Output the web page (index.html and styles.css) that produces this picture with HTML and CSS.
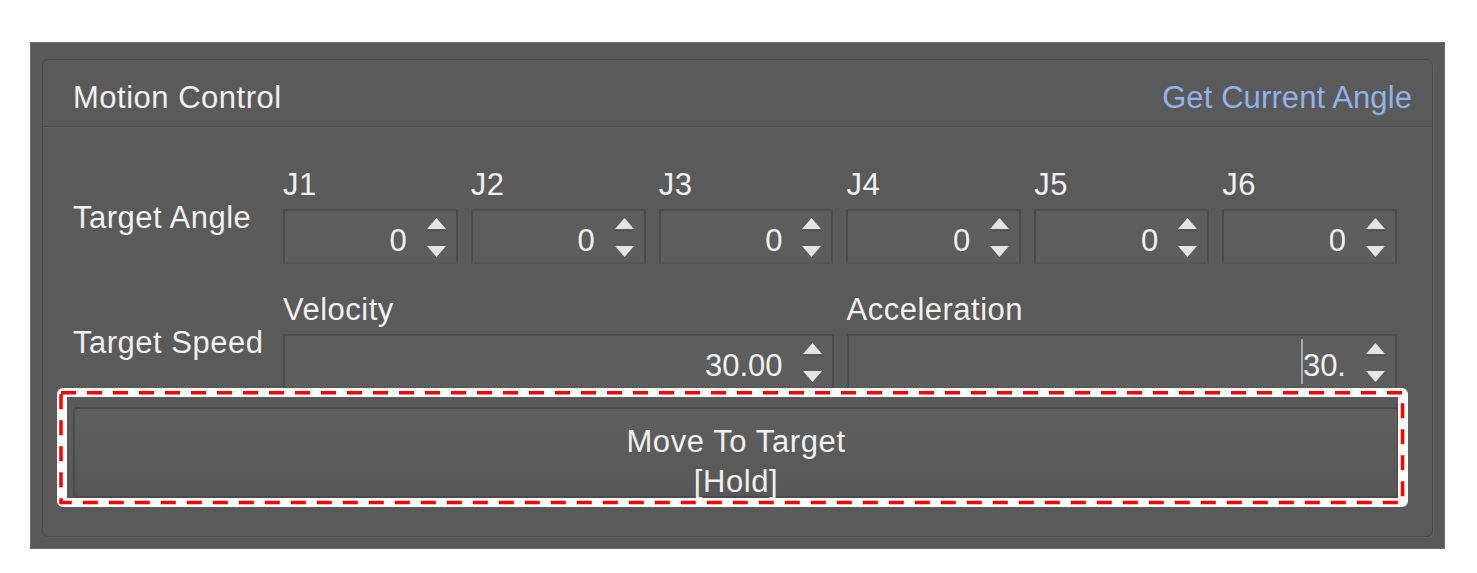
FILE: index.html
```html
<!DOCTYPE html>
<html lang="en">
<head>
  <meta charset="UTF-8">
  <meta name="viewport" content="width=device-width, initial-scale=1.0">
  <title>Motion Control</title>
  <link rel="stylesheet" href="styles.css">
</head>
<body>
  <div class="panel">
    <div class="group">
      <div class="group-head">
        <span class="title">Motion Control</span>
        <a class="link" href="#">Get Current Angle</a>
      </div>

      <div class="group-body">
        <div class="row">
          <div class="row-label">Target Angle</div>
          <div class="fields six">
            <div class="field">
              <div class="field-label">J1</div>
              <div class="spin"><span class="val">0</span><svg class="arrows" width="19" height="40" viewBox="0 0 19 40"><polygon points="9.5,0 19,11 0,11" fill="#e4e4e4"/><rect x="0" y="12" width="19" height="1" fill="#505050"/><polygon points="0,28 19,28 9.5,39" fill="#e4e4e4"/></svg></div>
            </div>
            <div class="field">
              <div class="field-label">J2</div>
              <div class="spin"><span class="val">0</span><svg class="arrows" width="19" height="40" viewBox="0 0 19 40"><polygon points="9.5,0 19,11 0,11" fill="#e4e4e4"/><rect x="0" y="12" width="19" height="1" fill="#505050"/><polygon points="0,28 19,28 9.5,39" fill="#e4e4e4"/></svg></div>
            </div>
            <div class="field">
              <div class="field-label">J3</div>
              <div class="spin"><span class="val">0</span><svg class="arrows" width="19" height="40" viewBox="0 0 19 40"><polygon points="9.5,0 19,11 0,11" fill="#e4e4e4"/><rect x="0" y="12" width="19" height="1" fill="#505050"/><polygon points="0,28 19,28 9.5,39" fill="#e4e4e4"/></svg></div>
            </div>
            <div class="field">
              <div class="field-label">J4</div>
              <div class="spin"><span class="val">0</span><svg class="arrows" width="19" height="40" viewBox="0 0 19 40"><polygon points="9.5,0 19,11 0,11" fill="#e4e4e4"/><rect x="0" y="12" width="19" height="1" fill="#505050"/><polygon points="0,28 19,28 9.5,39" fill="#e4e4e4"/></svg></div>
            </div>
            <div class="field">
              <div class="field-label">J5</div>
              <div class="spin"><span class="val">0</span><svg class="arrows" width="19" height="40" viewBox="0 0 19 40"><polygon points="9.5,0 19,11 0,11" fill="#e4e4e4"/><rect x="0" y="12" width="19" height="1" fill="#505050"/><polygon points="0,28 19,28 9.5,39" fill="#e4e4e4"/></svg></div>
            </div>
            <div class="field">
              <div class="field-label">J6</div>
              <div class="spin"><span class="val">0</span><svg class="arrows" width="19" height="40" viewBox="0 0 19 40"><polygon points="9.5,0 19,11 0,11" fill="#e4e4e4"/><rect x="0" y="12" width="19" height="1" fill="#505050"/><polygon points="0,28 19,28 9.5,39" fill="#e4e4e4"/></svg></div>
            </div>
          </div>
        </div>

        <div class="row row-speed">
          <div class="row-label">Target Speed</div>
          <div class="fields two">
            <div class="field">
              <div class="field-label">Velocity</div>
              <div class="spin"><span class="val">30.00</span><svg class="arrows" width="19" height="40" viewBox="0 0 19 40"><polygon points="9.5,0 19,11 0,11" fill="#e4e4e4"/><rect x="0" y="12" width="19" height="1" fill="#505050"/><polygon points="0,28 19,28 9.5,39" fill="#e4e4e4"/></svg></div>
            </div>
            <div class="field">
              <div class="field-label">Acceleration</div>
              <div class="spin"><span class="val caret">30.</span><svg class="arrows" width="19" height="40" viewBox="0 0 19 40"><polygon points="9.5,0 19,11 0,11" fill="#e4e4e4"/><rect x="0" y="12" width="19" height="1" fill="#505050"/><polygon points="0,28 19,28 9.5,39" fill="#e4e4e4"/></svg></div>
            </div>
          </div>
        </div>

        <button class="move-btn">Move To Target<br>[Hold]</button>
      </div>
    </div>

    <!-- highlight around the hold button -->
    <svg class="mark" width="1351" height="120" viewBox="0 0 1351 120">
      <path fill="#fff" fill-rule="evenodd" d="M6 0 H1345 A6 6 0 0 1 1351 6 V113 A6 6 0 0 1 1345 119 H6 A6 6 0 0 1 0 113 V6 A6 6 0 0 1 6 0 Z M10 9 V110 H1341 V9 Z"/>
      <rect x="4" y="4.7" width="1341.5" height="109.8" fill="none" stroke="#ff0000" stroke-width="3.5" stroke-dasharray="15 11"/>
    </svg>
  </div>
</body>
</html>
```

FILE: styles.css
```css
body {
  margin: 0;
  padding: 0;
  background-color: #ffffff;
  font-family: "Liberation Sans", Arial, sans-serif;
  font-size: 31px;
  line-height: 36px;
  letter-spacing: 0.5px;
  color: #f0f0f0;
}
.panel {
  position: relative;
  box-sizing: border-box;
  margin: 42px 0 0 30px;
  width: 1415px;
  height: 507px;
  padding: 16px 11px 0 11px;
  background-color: #595959;
  border: 1px solid #6e6e6e;
}
.group {
  box-sizing: border-box;
  height: 478px;
  border: 1px solid #4b4b4b;
  border-radius: 6px;
  box-shadow: 1px 1px 0 #646464;
  background-color: #5a5a5a;
}
.group-head {
  display: flex;
  justify-content: space-between;
  height: 67px;
  box-sizing: border-box;
  padding: 20px 20px 0 30px;
  border-bottom: 1px solid #4e4e4e;
  box-shadow: 0 1px 0 #606060;
}
.link {
  color: #8fb3ea;
  text-decoration: none;
  letter-spacing: 0.1px;
}
.group-body {
  display: flex;
  flex-direction: column;
  padding: 40px 35px 0 30px;
}
.row {
  display: flex;
}
.row-speed {
  margin-top: 28px;
}
.row-label {
  width: 210px;
  flex-shrink: 0;
  padding-top: 33px;
}
.fields {
  display: grid;
  flex: 1;
  column-gap: 13px;
}
.fields.six {
  grid-template-columns: repeat(6, 1fr);
}
.fields.two {
  grid-template-columns: 1fr 1fr;
}
.field-label {
  height: 36px;
  margin-bottom: 6px;
}
.spin {
  display: flex;
  justify-content: flex-end;
  align-items: center;
  box-sizing: border-box;
  height: 55px;
  padding: 0 10px 0 8px;
  background-color: #5d5d5d;
  border: 2px solid #4c4c4c;
  border-bottom-color: #555555;
}
.val {
  padding-top: 9px;
  margin-right: 20px;
  letter-spacing: 0;
}
.caret {
  border-left: 2px solid #a8a8a8;
  padding-left: 0;
}
.arrows {
  display: block;
  margin-top: 2px;
}
.move-btn {
  display: block;
  box-sizing: border-box;
  margin: 18px -2px 0 0;
  height: 91px;
  padding: 13px 0 0 0;
  font-family: inherit;
  font-size: 31px;
  line-height: 40px;
  letter-spacing: 0.6px;
  color: #f0f0f0;
  text-align: center;
  background: linear-gradient(#5f5f5f, #575757);
  border: 2px solid #4a4a4a;
  border-radius: 4px;
}
.mark {
  position: absolute;
  left: 26px;
  top: 345px;
}
```
